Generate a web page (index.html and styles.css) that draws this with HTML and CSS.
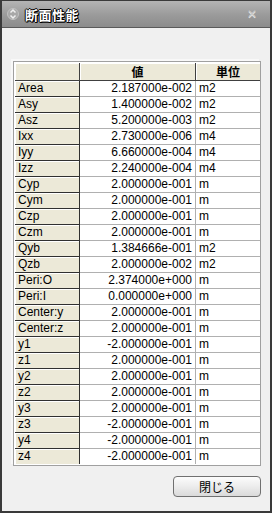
FILE: index.html
```html
<!DOCTYPE html>
<html lang="ja">
<head>
  <meta charset="UTF-8">
  <title>断面性能</title>
  <link rel="stylesheet" href="styles.css">
</head>
<body>
  <div class="window">
    <div class="titlebar">
      <svg class="title-icon" width="12" height="14" viewBox="0 0 12 14">
        <circle cx="6" cy="7" r="5.5" fill="#a8a8a8" stroke="#c8c8c8" stroke-width="0.8"/>
        <path d="M3.5 5.5 L6 3 L8.5 5.5" fill="none" stroke="#f0f0f0" stroke-width="1.5"/>
        <path d="M3.5 8.5 L6 11 L8.5 8.5" fill="none" stroke="#f0f0f0" stroke-width="1.5"/>
      </svg>
      <span class="title-text">断面性能</span>
      <span class="close-btn">&#x2715;</span>
    </div>

    <div class="content">
      <div class="panel">
        <table class="props">
          <tr class="head">
            <th class="lbl"></th>
            <th>値</th>
            <th>単位</th>
          </tr>
          <tr><td class="lbl">Area</td><td class="val">2.187000e-002</td><td class="unit">m2</td></tr>
          <tr><td class="lbl">Asy</td><td class="val">1.400000e-002</td><td class="unit">m2</td></tr>
          <tr><td class="lbl">Asz</td><td class="val">5.200000e-003</td><td class="unit">m2</td></tr>
          <tr><td class="lbl">Ixx</td><td class="val">2.730000e-006</td><td class="unit">m4</td></tr>
          <tr><td class="lbl">Iyy</td><td class="val">6.660000e-004</td><td class="unit">m4</td></tr>
          <tr><td class="lbl">Izz</td><td class="val">2.240000e-004</td><td class="unit">m4</td></tr>
          <tr><td class="lbl">Cyp</td><td class="val">2.000000e-001</td><td class="unit">m</td></tr>
          <tr><td class="lbl">Cym</td><td class="val">2.000000e-001</td><td class="unit">m</td></tr>
          <tr><td class="lbl">Czp</td><td class="val">2.000000e-001</td><td class="unit">m</td></tr>
          <tr><td class="lbl">Czm</td><td class="val">2.000000e-001</td><td class="unit">m</td></tr>
          <tr><td class="lbl">Qyb</td><td class="val">1.384666e-001</td><td class="unit">m2</td></tr>
          <tr><td class="lbl">Qzb</td><td class="val">2.000000e-002</td><td class="unit">m2</td></tr>
          <tr><td class="lbl">Peri:O</td><td class="val">2.374000e+000</td><td class="unit">m</td></tr>
          <tr><td class="lbl">Peri:I</td><td class="val">0.000000e+000</td><td class="unit">m</td></tr>
          <tr><td class="lbl">Center:y</td><td class="val">2.000000e-001</td><td class="unit">m</td></tr>
          <tr><td class="lbl">Center:z</td><td class="val">2.000000e-001</td><td class="unit">m</td></tr>
          <tr><td class="lbl">y1</td><td class="val">-2.000000e-001</td><td class="unit">m</td></tr>
          <tr><td class="lbl">z1</td><td class="val">2.000000e-001</td><td class="unit">m</td></tr>
          <tr><td class="lbl">y2</td><td class="val">2.000000e-001</td><td class="unit">m</td></tr>
          <tr><td class="lbl">z2</td><td class="val">2.000000e-001</td><td class="unit">m</td></tr>
          <tr><td class="lbl">y3</td><td class="val">2.000000e-001</td><td class="unit">m</td></tr>
          <tr><td class="lbl">z3</td><td class="val">-2.000000e-001</td><td class="unit">m</td></tr>
          <tr><td class="lbl">y4</td><td class="val">-2.000000e-001</td><td class="unit">m</td></tr>
          <tr><td class="lbl">z4</td><td class="val">-2.000000e-001</td><td class="unit">m</td></tr>
        </table>
      </div>

      <div class="footer">
        <button class="close-button">閉じる</button>
      </div>
    </div>
  </div>
</body>
</html>
```

FILE: styles.css
```css
html, body {
  margin: 0;
  padding: 0;
}
body {
  width: 272px;
  height: 513px;
  overflow: hidden;
  font-family: "Liberation Sans", "Noto Sans CJK JP", sans-serif;
  font-size: 12px;
  color: #000;
}
.window {
  box-sizing: border-box;
  width: 272px;
  height: 513px;
  border: 2px solid #3a3a3a;
  border-top: 1px solid #3a3a3a;
  background-color: #f0f0f0;
  display: flex;
  flex-direction: column;
}
.titlebar {
  height: 26px;
  flex: none;
  display: flex;
  align-items: center;
  padding: 0 6px 0 5px;
  background: linear-gradient(#b4b4b4, #9a9a9a 55%, #8c8c8c);
  border-bottom: 1px solid #5a5a5a;
}
.title-icon {
  margin-right: 6px;
}
.title-text {
  flex: 1;
  font-family: "Noto Sans CJK JP", sans-serif;
  font-weight: bold;
  font-size: 13px;
  color: #fff;
  text-shadow: 1px 0 0 #000, -1px 0 0 #000, 0 1px 0 #000, 0 -1px 0 #000, 1px 1px 0 #000;
  letter-spacing: 0.5px;
}
.close-btn {
  color: #c8c8c8;
  font-size: 12px;
  margin-right: 7px;
  text-shadow: 0 1px 0 #e8e8e8;
}
.content {
  flex: 1;
  display: flex;
  flex-direction: column;
  padding: 33px 9px 0 11px;
}
.panel {
  border: 1px solid #a0a0a0;
  padding: 1px;
  background-color: #fff;
  box-shadow: -2px -2px 0 #f8f8f8;
}
.props {
  border-collapse: separate;
  border-spacing: 0;
  width: 245px;
  table-layout: fixed;
}
.props th, .props td {
  height: 15px;
  padding: 0 3px;
  border-right: 1px solid #b0b0b0;
  border-bottom: 1px solid #b0b0b0;
  white-space: nowrap;
  overflow: hidden;
  line-height: 15px;
}
.props tr.head th {
  height: 17px;
  line-height: 17px;
  background-color: #ece9d8;
  border-right: 1px solid #404040;
  border-bottom: 1px solid #404040;
  box-shadow: inset 1px 1px 0 #fff;
  font-family: "Noto Sans CJK JP", sans-serif;
  font-weight: bold;
  font-size: 12px;
  text-align: center;
}
.props .lbl {
  width: 58px;
  background-color: #ece9d8;
  border-right: 1px solid #303030;
  border-bottom: 1px solid #303030;
  box-shadow: inset 1px 1px 0 #fff;
  text-align: left;
}
.props tr.head th:nth-child(2) {
  width: 109px;
}
.props .val {
  text-align: right;
  padding-right: 3px;
}
.props .unit {
  text-align: left;
  padding-left: 3px;
  border-right: none;
}
.props tr:last-child td {
  border-bottom: none;
}
.props tr.head th:last-child {
  border-right: none;
}
.footer {
  display: flex;
  justify-content: flex-end;
  padding: 10px 0 0;
}
.close-button {
  width: 88px;
  height: 21px;
  font-family: "Noto Sans CJK JP", sans-serif;
  font-size: 12px;
  color: #000;
  border: 1px solid #707070;
  border-radius: 4px;
  background: linear-gradient(#fcfcfc, #ececec 50%, #dadada);
  padding: 0;
  cursor: pointer;
}
```
